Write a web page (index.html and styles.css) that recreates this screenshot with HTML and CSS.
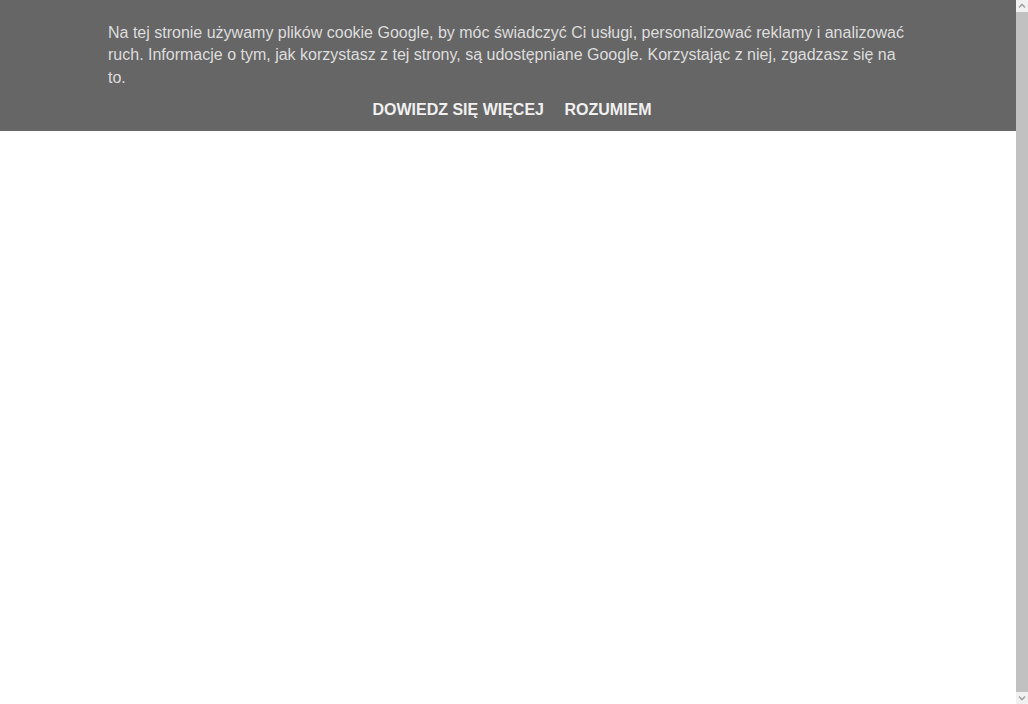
FILE: index.html
```html
<!DOCTYPE html>
<html lang="pl">
<head>
<meta charset="utf-8">
<title>Cookie</title>
<link rel="stylesheet" href="styles.css">
</head>
<body>
<div class="page">
  <div class="main">
    <div class="cookie-info">
      <div class="cookie-inner">
        <p class="cookie-text">Na tej stronie używamy plików cookie Google, by móc świadczyć Ci usługi, personalizować reklamy i analizować ruch. Informacje o tym, jak korzystasz z tej strony, są udostępniane Google. Korzystając z niej, zgadzasz się na to.</p>
        <div class="cookie-buttons">
          <a class="cookie-button">Dowiedz się więcej</a>
          <a class="cookie-button">Rozumiem</a>
        </div>
      </div>
    </div>
  </div>
  <div class="scrollbar">
    <div class="sb-btn"><svg width="12" height="12" viewBox="0 0 12 12"><path d="M3 7.5 L6 4.5 L9 7.5" fill="none" stroke="#a3a3a3" stroke-width="1.6"/></svg></div>
    <div class="sb-thumb"></div>
    <div class="sb-btn"><svg width="12" height="12" viewBox="0 0 12 12"><path d="M3 4.5 L6 7.5 L9 4.5" fill="none" stroke="#a3a3a3" stroke-width="1.6"/></svg></div>
  </div>
</div>
</body>
</html>
```
FILE: styles.css
```css
html, body {
  margin: 0;
  padding: 0;
  height: 100%;
  overflow: hidden;
  background: #fff;
}
.page {
  display: flex;
  height: 100vh;
}
.main {
  flex: 1;
  min-width: 0;
}
.cookie-info {
  background-color: #666666;
  color: #dddddd;
  font-family: Arial, "Liberation Sans", sans-serif;
  font-size: 16px;
  padding: 8px 0 8px;
  height: 115px;
  box-sizing: content-box;
}
.cookie-inner {
  max-width: 800px;
  margin: 0 auto;
}
.cookie-text {
  margin: 14px 0 10px;
  line-height: 22.3px;
}
.cookie-buttons {
  text-align: center;
  line-height: 22px;
  padding-left: 8px;
}
.cookie-button {
  font-weight: bold;
  color: #f0f0f0;
  text-transform: uppercase;
  margin: 0 8px;
  display: inline-block;
}
.scrollbar {
  width: 12px;
  flex: none;
  display: flex;
  flex-direction: column;
  background: #f1f1f1;
}
.sb-btn {
  height: 12px;
  display: flex;
  align-items: center;
  justify-content: center;
  background: #f1f1f1;
}
.sb-thumb {
  flex: 1;
  background: #c1c1c1;
}
```
